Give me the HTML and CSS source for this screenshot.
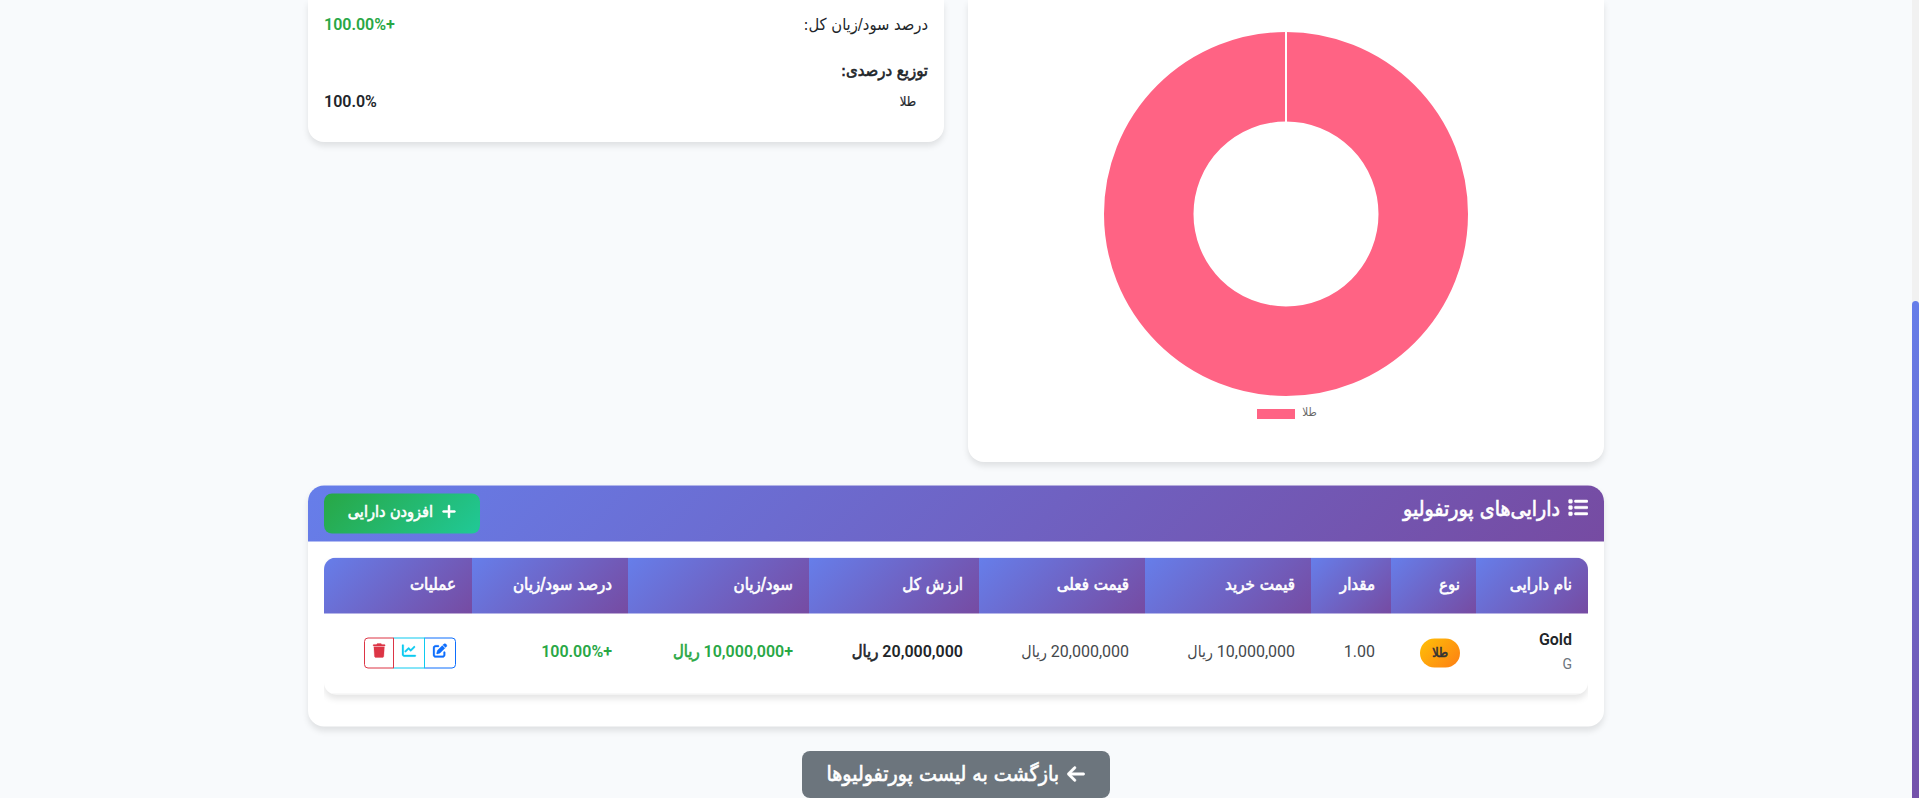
FILE: index.html
```html
<!DOCTYPE html>
<html lang="fa" dir="rtl">
<head>
<meta charset="utf-8">
<title>پورتفولیو</title>
<link rel="stylesheet" href="styles.css">
</head>
<body>
<div class="page">
  <div class="scroll-track" dir="ltr"><div class="scroll-thumb"></div></div>
  <main class="container">
    <div class="overview">
      <section class="card chart-card">
        <svg class="donut" width="364" height="364" viewBox="-182 -182 364 364">
          <circle r="137.25" fill="none" stroke="#ff6384" stroke-width="89.5"/>
          <path d="M0-183V-91" stroke="#fff" stroke-width="2"/>
        </svg>
        <div class="legend" dir="ltr"><span class="swatch"></span><span class="legend-label">طلا</span></div>
      </section>
      <section class="card stats-card">
        <div class="stat"><span class="fa stat-label">درصد سود/زیان کل:</span><b class="gain">+100.00%</b></div>
        <div class="fa heavy split-title">توزیع درصدی:</div>
        <div class="stat split"><span class="fa split-name">طلا</span><b>100.0%</b></div>
      </section>
    </div>

    <section class="card assets">
      <header class="assets-head">
        <h5 class="title">
          <svg class="icon-list" viewBox="0 0 512 512"><path d="M40 48C26.7 48 16 58.7 16 72v48c0 13.3 10.7 24 24 24H88c13.3 0 24-10.7 24-24V72c0-13.3-10.7-24-24-24H40zM192 64c-17.7 0-32 14.3-32 32s14.3 32 32 32H480c17.7 0 32-14.3 32-32s-14.3-32-32-32H192zm0 160c-17.7 0-32 14.3-32 32s14.3 32 32 32H480c17.7 0 32-14.3 32-32s-14.3-32-32-32H192zm0 160c-17.7 0-32 14.3-32 32s14.3 32 32 32H480c17.7 0 32-14.3 32-32s-14.3-32-32-32H192zM16 232v48c0 13.3 10.7 24 24 24H88c13.3 0 24-10.7 24-24V232c0-13.3-10.7-24-24-24H40c-13.3 0-24 10.7-24 24zM40 368c-13.3 0-24 10.7-24 24v48c0 13.3 10.7 24 24 24H88c13.3 0 24-10.7 24-24V392c0-13.3-10.7-24-24-24H40z"/></svg>
          <span class="fa heavy">دارایی‌های پورتفولیو</span>
        </h5>
        <a class="btn-add">
          <svg class="icon-plus" viewBox="0 0 448 512"><path d="M256 80c0-17.7-14.3-32-32-32s-32 14.3-32 32l0 144L48 224c-17.7 0-32 14.3-32 32s14.3 32 32 32l144 0 0 144c0 17.7 14.3 32 32 32s32-14.3 32-32l0-144 144 0c17.7 0 32-14.3 32-32s-14.3-32-32-32l-144 0 0-144z"/></svg>
          <span class="fa heavy">افزودن دارایی</span>
        </a>
      </header>
      <div class="table-wrap">
        <table>
          <colgroup><col class="c-name"><col class="c-type"><col class="c-qty"><col class="c-buy"><col class="c-now"><col class="c-total"><col class="c-gain"><col class="c-pct"><col class="c-act"></colgroup>
          <thead>
            <tr><th>نام دارایی</th><th>نوع</th><th>مقدار</th><th>قیمت خرید</th><th>قیمت فعلی</th><th>ارزش کل</th><th>سود/زیان</th><th>درصد سود/زیان</th><th>عملیات</th></tr>
          </thead>
          <tbody>
            <tr>
              <td><div class="asset-name">Gold</div><div class="asset-code">G</div></td>
              <td><span class="badge fa heavy">طلا</span></td>
              <td>1.00</td>
              <td>10,000,000 <span class="fa">ریال</span></td>
              <td>20,000,000 <span class="fa">ریال</span></td>
              <td class="strong">20,000,000 <span class="fa heavy">ریال</span></td>
              <td class="strong gain">+10,000,000 <span class="fa heavy">ریال</span></td>
              <td class="strong gain">+100.00%</td>
              <td>
                <div class="actions">
                  <a class="act edit"><svg width="14" height="14" viewBox="0 0 512 512"><path d="M471.6 21.7c-21.9-21.9-57.3-21.9-79.2 0L362.3 51.7l97.9 97.9 30.1-30.1c21.9-21.9 21.9-57.3 0-79.2L471.6 21.7zm-299.2 220c-6.1 6.1-10.8 13.6-13.5 21.9l-29.6 88.8c-2.9 8.6-.6 18.1 5.8 24.6s15.9 8.7 24.6 5.8l88.8-29.6c8.2-2.7 15.7-7.4 21.9-13.5L437.7 172.3 339.7 74.3 172.4 241.7zM96 64C43 64 0 107 0 160V416c0 53 43 96 96 96H352c53 0 96-43 96-96V320c0-17.7-14.3-32-32-32s-32 14.3-32 32v96c0 17.7-14.3 32-32 32H96c-17.7 0-32-14.3-32-32V160c0-17.7 14.3-32 32-32h96c17.7 0 32-14.3 32-32s-14.3-32-32-32H96z"/></svg></a>
                  <a class="act chart"><svg width="14" height="14" viewBox="0 0 512 512"><path d="M64 64c0-17.7-14.3-32-32-32S0 46.3 0 64V400c0 44.2 35.8 80 80 80H480c17.7 0 32-14.3 32-32s-14.3-32-32-32H80c-8.8 0-16-7.2-16-16V64zm406.6 86.6c12.5-12.5 12.5-32.8 0-45.3s-32.8-12.5-45.3 0L320 210.7l-57.4-57.4c-12.5-12.5-32.8-12.5-45.3 0l-112 112c-12.5 12.5-12.5 32.8 0 45.3s32.8 12.5 45.3 0L240 221.3l57.4 57.4c12.5 12.5 32.8 12.5 45.3 0l128-128z"/></svg></a>
                  <a class="act delete"><svg width="12.25" height="14" viewBox="0 0 448 512"><path d="M135.2 17.7L128 32H32C14.3 32 0 46.3 0 64S14.3 96 32 96H416c17.7 0 32-14.3 32-32s-14.3-32-32-32H320l-7.2-14.3C307.4 6.8 296.3 0 284.2 0H163.8c-12.1 0-23.2 6.8-28.6 17.7zM416 128H32L53.2 467c1.6 25.3 22.6 45 47.9 45H346.9c25.3 0 46.3-19.7 47.9-45L416 128z"/></svg></a>
                </div>
              </td>
            </tr>
          </tbody>
        </table>
      </div>
    </section>

    <a class="btn-back">
      <svg class="icon-back" viewBox="0 0 448 512"><path d="M9.4 233.4c-12.5 12.5-12.5 32.8 0 45.3l160 160c12.5 12.5 32.8 12.5 45.3 0s12.5-32.8 0-45.3L109.2 288 416 288c17.7 0 32-14.3 32-32s-14.3-32-32-32l-306.7 0L214.6 118.6c12.5-12.5 12.5-32.8 0-45.3s-32.8-12.5-45.3 0l-160 160z"/></svg>
      <span class="fa heavy">بازگشت به لیست پورتفولیوها</span>
    </a>
  </main>
</div>
</body>
</html>
```

FILE: styles.css
```css
* { box-sizing: border-box; }
body {
  margin: 0;
  background: #f8f9fa;
  color: #212529;
  font: 16px/24px Roboto, "DejaVu Sans Condensed", "DejaVu Sans", sans-serif;
  overflow: hidden;
}
svg { display: block; fill: currentColor; flex: none; }
.fa { font-family: "DejaVu Sans Condensed", "DejaVu Sans", sans-serif; line-height: 20px; white-space: nowrap; }
/* Semi-bold Persian text: regular glyphs thickened with a stroke */
.heavy, th { font-weight: 400; -webkit-text-stroke: .6px currentColor; }
.page { display: flex; height: 798px; background: #f8fafc; }
.container { flex: 1; display: flex; flex-direction: column; align-items: center; gap: 24px; }
.overview { display: flex; align-items: flex-start; gap: 24px; width: 1296px; }
.card { background: #fff; border-radius: 16px; box-shadow: 0 4px 6px rgba(0, 0, 0, .1); }
.chart-card, .stats-card { width: 636px; border-radius: 0 0 16px 16px; }
.chart-card { height: 462px; padding-top: 32px; display: flex; flex-direction: column; align-items: center; gap: 13px; }
.legend { display: flex; gap: 7px; height: 10px; padding-left: 2px; align-items: center; }
.swatch { width: 38px; height: 10px; background: #ff6384; }
.legend-label { font: 11.5px/10px "DejaVu Sans Condensed", sans-serif; color: #666; padding-bottom: 5px; }

.stats-card { height: 142px; padding: 13px 16px 11px; }
.stat { display: flex; justify-content: space-between; align-items: center; height: 24px; }
.stat b { font-weight: 600; }
.stat-label { font-size: 16.4px; }
.gain, td.gain { color: #28a745; }
.split-title { margin-top: 24px; font-size: 16.6px; }
.split { margin-top: 9px; }
.split-name { font-size: 13px; padding-right: 12px; -webkit-text-stroke: .2px currentColor; }

.assets { width: 1296px; height: 241px; transform: translateY(-.5px); }
.assets-head {
  display: flex;
  justify-content: space-between;
  height: 56px;
  padding: 8px 16px;
  border-radius: 16px 16px 0 0;
  background: linear-gradient(135deg, #667eea, #764ba2);
  color: #fff;
}
.title { display: flex; gap: 8px; margin: 2px 0 0; height: 25px; align-items: center; font-size: 21.2px; }
.icon-list { width: 20px; height: 20px; margin-bottom: 2px; stroke: currentColor; stroke-width: 12; }
.btn-add {
  display: flex;
  align-items: center;
  gap: 9px;
  width: 156px;
  height: 40px;
  padding: 0 24px 4px;
  border-radius: 8px;
  background: linear-gradient(135deg, #28a745, #20c997);
  font-size: 16.1px;
}
.icon-plus { width: 14px; height: 16px; stroke: currentColor; stroke-width: 16; }

.table-wrap { margin: 16px 16px 0; height: 153px; overflow: hidden; }
table {
  width: 1264px;
  table-layout: fixed;
  border-spacing: 0;
  border-radius: 12px;
  overflow: hidden;
  box-shadow: 0 4px 6px rgba(0, 0, 0, .1);
}
.c-name { width: 112px; }
.c-type { width: 85px; }
.c-qty { width: 80px; }
.c-buy, .c-now { width: 166px; }
.c-total { width: 170px; }
.c-gain { width: 181px; }
.c-pct { width: 156px; }
.c-act { width: 148px; }
th {
  height: 56px;
  padding: 0 16px 5px;
  text-align: right;
  white-space: nowrap;
  color: #fff;
  font: 400 16.8px/24px "DejaVu Sans Condensed", "DejaVu Sans", sans-serif;
  background: linear-gradient(135deg, #667eea, #764ba2);
}
td { height: 81px; padding: 0 16px 4px; vertical-align: middle; white-space: nowrap; color: #44484c; border-bottom: 1px solid #f2f2f2; }
td .fa { font-size: 15.8px; }
td.strong { font-weight: 600; color: #212529; }
td.strong .fa { font-size: 16.5px; }
td.gain { color: #28a745; }
.asset-name { font-weight: 600; color: #212529; }
.asset-code { font-size: 14px; color: #6c757d; }
td .badge {
  display: flex;
  align-items: center;
  justify-content: center;
  width: 40px;
  height: 29px;
  margin-top: 3px;
  padding-bottom: 2px;
  border-radius: 15px;
  background: linear-gradient(135deg, #ffc107, #fd7e14);
  color: #333;
  font-size: 12.5px;
}
.actions { display: flex; margin-top: 3px; }
.act { display: flex; justify-content: center; height: 31px; padding-top: 5px; border: 1px solid; }
.act svg { stroke: currentColor; stroke-width: 10; overflow: visible; }
.edit { width: 32px; color: #0d6efd; border-radius: 0 4px 4px 0; }
.chart { width: 32px; margin-right: -1px; color: #0dcaf0; }
.delete { width: 30px; margin-right: -1px; color: #dc3545; border-radius: 4px 0 0 4px; }

.btn-back {
  display: flex;
  align-items: center;
  gap: 8px;
  width: 308px;
  height: 47px;
  padding: 0 25px 2px;
  border-radius: 8px;
  background: #6c757d;
  color: #fff;
  font-size: 21.2px;
}
.icon-back { width: 18px; height: 20px; stroke: currentColor; stroke-width: 12; }

.scroll-track { width: 7px; padding-top: 301px; background: #f1f1f1; overflow: hidden; }
.scroll-thumb { height: 560px; border-radius: 4px; background: linear-gradient(135deg, #667eea, #764ba2); }
```
